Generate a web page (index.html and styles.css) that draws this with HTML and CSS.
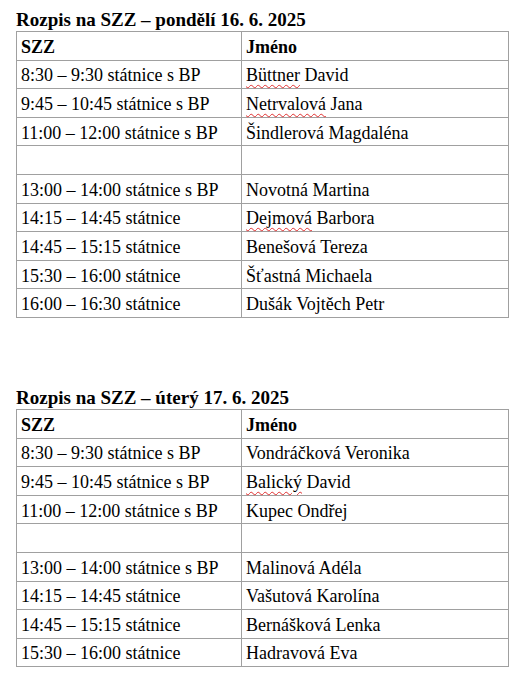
FILE: index.html
```html
<!DOCTYPE html>
<html lang="cs">
<head>
<meta charset="utf-8">
<title>Rozpis na SZZ</title>
<link rel="stylesheet" href="styles.css">
</head>
<body>
<div class="page">
  <section class="day">
    <h2 class="title">Rozpis na SZZ – pondělí 16. 6. 2025</h2>
    <table class="sched">
      <colgroup><col class="c1"><col class="c2"></colgroup>
      <tr class="head"><td>SZZ</td><td>Jméno</td></tr>
      <tr><td>8:30 – 9:30 státnice s BP</td><td><span class="sp">Büttner</span> David</td></tr>
      <tr><td>9:45 – 10:45 státnice s BP</td><td><span class="sp">Netrvalová</span> Jana</td></tr>
      <tr><td>11:00 – 12:00 státnice s BP</td><td>Šindlerová Magdaléna</td></tr>
      <tr><td></td><td></td></tr>
      <tr><td>13:00 – 14:00 státnice s BP</td><td>Novotná Martina</td></tr>
      <tr><td>14:15 – 14:45 státnice</td><td><span class="sp">Dejmová</span> Barbora</td></tr>
      <tr><td>14:45 – 15:15 státnice</td><td>Benešová Tereza</td></tr>
      <tr><td>15:30 – 16:00 státnice</td><td>Šťastná Michaela</td></tr>
      <tr><td>16:00 – 16:30 státnice</td><td>Dušák Vojtěch Petr</td></tr>
    </table>
  </section>
  <section class="day second">
    <h2 class="title">Rozpis na SZZ – úterý 17. 6. 2025</h2>
    <table class="sched">
      <colgroup><col class="c1"><col class="c2"></colgroup>
      <tr class="head"><td>SZZ</td><td>Jméno</td></tr>
      <tr><td>8:30 – 9:30 státnice s BP</td><td>Vondráčková Veronika</td></tr>
      <tr><td>9:45 – 10:45 státnice s BP</td><td><span class="sp">Balický</span> David</td></tr>
      <tr><td>11:00 – 12:00 státnice s BP</td><td>Kupec Ondřej</td></tr>
      <tr><td></td><td></td></tr>
      <tr><td>13:00 – 14:00 státnice s BP</td><td>Malinová Adéla</td></tr>
      <tr><td>14:15 – 14:45 státnice</td><td>Vašutová Karolína</td></tr>
      <tr><td>14:45 – 15:15 státnice</td><td>Bernášková Lenka</td></tr>
      <tr><td>15:30 – 16:00 státnice</td><td>Hadravová Eva</td></tr>
    </table>
  </section>
</div>
</body>
</html>
```
FILE: styles.css
```css
html, body {
  margin: 0;
  padding: 0;
  background: #ffffff;
}
.page {
  padding: 9px 16px 0 16px;
  font-family: "Liberation Serif", "Times New Roman", serif;
  color: #000000;
}
.day.second {
  margin-top: 69px;
}
.title {
  margin: 0;
  font-family: "Liberation Serif", "Times New Roman", serif;
  font-size: 19px;
  line-height: 22px;
  font-weight: bold;
}
.sched {
  border-collapse: collapse;
  width: 492px;
  table-layout: fixed;
  font-family: "Liberation Serif", "Times New Roman", serif;
  font-size: 18px;
}
.c1 { width: 225px; }
.c2 { width: 267px; }
.sched td {
  font-family: "Liberation Serif", "Times New Roman", serif;
  font-size: 18px;
  border: 1px solid #a0a0a0;
  height: 25.6px;
  padding: 2px 4px 0 4px;
  line-height: 20px;
  vertical-align: middle;
  white-space: nowrap;
}
.head td {
  font-weight: bold;
}
.sp {
  text-decoration: underline wavy #e03030;
  text-decoration-thickness: 1px;
  text-underline-offset: 3px;
}
```
